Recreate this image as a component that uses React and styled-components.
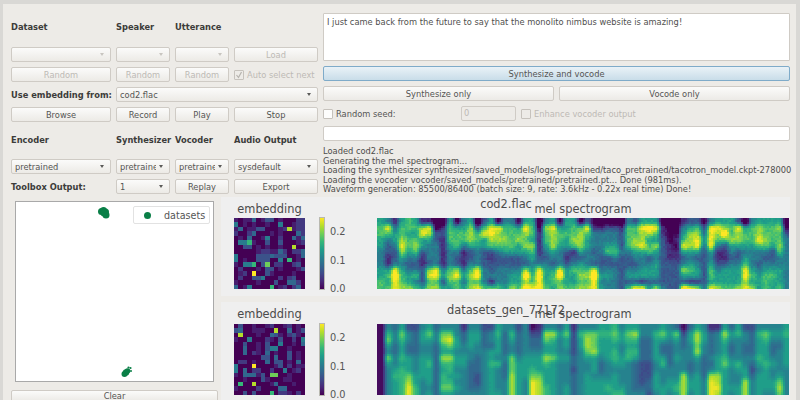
import React from 'react';
import styled, { createGlobalStyle, css } from 'styled-components';

const GlobalStyle = createGlobalStyle`
  html, body {
    margin: 0;
    padding: 0;
    background: #d9d8d5;
  }
`;

const VIRIDIS = ['#440154', '#482878', '#3e4a89', '#31688e', '#26828e', '#1f9e89', '#35b779', '#6ece58', '#b5de2b', '#fde725'];

const EMBED_COD = [
  '1011401330100022', '5010100100500122', '1401133000128122', '2002400010100042',
  '0104001500200414', '0556100300300012', '0033010100100800', '0000012211420224',
  '5000033343330014', '5010033300506010', '1055603702200230', '0200010330100013',
  '0120900310000100', '0200335000202300', '1000010003004420', '4015000060120240',
];

const EMBED_GEN = [
  '0300100120012010', '3400111008004013', '0800010043102310', '1005000210300205',
  '0030010300500104', '0040010355001000', '0040210401003010', '0000003304003010',
  '0220100403301040', '5000900001302011', '5040220020050120', '1044413077001000',
  '0010003100011000', '0600800014000100', '1000020000440000', '0030300060221020',
];

// columns of the first mel plot, low to high energy as viridis steps, top row first
const MEL_COD = [
  '566554445566', '486433225656', '245543348988', '566787545667', '665665434557', '565676434646',
  '278553223335', '287544437867', '013344448867', '023222224535', '566654446765', '156664337866',
  '456642224545', '577753346767', '036654448968', '368553334446', '588763233426', '187764334446',
  '466765334445', '466665334557', '156755334556', '587675437979', '566576545668', '012222348989',
  '476654345556', '587775435665', '156654448967', '556553235556', '566762346556', '167775356767',
  '386554446767', '124443438988', '024444334545', '034456334544', '034456434444', '023334333333',
  '466664334536', '366775434538', '587785445528', '597566345535', '586575455537', '022333333334',
  '011122233333', '011212233333', '245685347539', '357775456528', '367885345527', '134543333334',
  '488885456658', '587642234557', '579632235556', '566754345556', '387753345557', '056654568878',
  '466654445657', '577864434555', '566764345666', '566653345655', '576676445556', '013444444444',
];

const MEL_GEN = [
  '000000000000', '467547544444', '344334456555', '576556566666', '244335557899', '233334445566',
  '455445555444', '575445655545', '344333333333', '478658656675', '479758665675', '445545545454',
  '133445544444', '455544333334', '455443332234', '233344444444', '244355655555', '565554644445',
  '433334333444', '465447778888', '233334555555', '444445555444', '023345567999', '123345557888',
  '487558655566', '486557555555', '354445444444', '575545444455', '122223323333', '465544444444',
  '478875445555', '477785554555', '565554334555', '565555444565', '676566545556', '455445544456',
  '576566444444', '586565333334', '443333222234', '443333222332', '465555445554', '575335644455',
  '454333344554', '375445444565', '023344448888', '355444334554', '588785445555', '455443333444',
  '133334348999', '144445558898', '586556755555', '354334544454', '564444654455', '244334455888',
  '233334323444', '465556545555', '476555655554', '454334544554', '454344445787', '565555544444',
];

const seeded = (x, y, salt) => {
  const s = Math.sin(x * 12.9898 + y * 78.233 + salt) * 43758.5453;
  return s - Math.floor(s);
};

const clamp = (v, lo, hi) => Math.max(lo, Math.min(hi, v));

const mixViridis = (value) => {
  const i = Math.min(Math.floor(value), 8);
  const t = value - i;
  const a = VIRIDIS[i];
  const b = VIRIDIS[i + 1];
  const ch = (hex, at) => parseInt(hex.slice(at, at + 2), 16);
  const mix = (at) => Math.round(ch(a, at) * (1 - t) + ch(b, at) * t);
  return `rgb(${mix(1)},${mix(3)},${mix(5)})`;
};

// upsample of the column table, with a bit of grain for the raw recording
const melPaths = (columns, width, height, { grain, bias, contrast }) => {
  const rows = columns[0].length;
  const buckets = {};
  for (let x = 0; x < width; x += 2) {
    for (let y = 0; y < height; y += 2) {
      const u = clamp((x / width) * columns.length - 0.5, 0, columns.length - 1);
      const v = clamp((y / height) * rows - 0.5, 0, rows - 1);
      const c0 = Math.floor(u);
      const c1 = Math.min(c0 + 1, columns.length - 1);
      const r0 = Math.floor(v);
      const r1 = Math.min(r0 + 1, rows - 1);
      const raw = u - c0;
      const fu = raw * raw * (3 - 2 * raw);
      const fv = v - r0;
      const top = +columns[c0][r0] * (1 - fu) + +columns[c1][r0] * fu;
      const bottom = +columns[c0][r1] * (1 - fu) + +columns[c1][r1] * fu;
      const base = top * (1 - fv) + bottom * fv;
      const noise = (seeded(x, y, columns.length) - 0.5) * grain;
      const value = clamp(4.5 + (base - 4.5) * contrast + noise + bias, 0, 9);
      const key = Math.round(value * 4) / 4;
      buckets[key] = (buckets[key] || '') + `M${x} ${y}h2v2h-2z`;
    }
  }
  return Object.entries(buckets).map(([key, d]) => ({ fill: mixViridis(+key), d }));
};

const Page = styled.div`
  width: 800px;
  height: 400px;
  overflow: hidden;
  box-sizing: border-box;
  padding: 4px 4px 0 3px;
  background: #d9d8d5;
  font-family: "DejaVu Sans", sans-serif;
  font-size: 8.3px;
  color: #4a4a48;
`;

const Panel = styled.div`
  height: 396px;
  box-sizing: border-box;
  padding: 9px 6px 0 8px;
  background: #edebe7;
  display: flex;
  flex-direction: column;
`;

const TopRow = styled.div`
  display: flex;
  gap: 5px;
  height: 184px;
`;

const Controls = styled.div`
  width: 307px;
  display: grid;
  grid-template-columns: 100px 54px 54px 84px;
  grid-template-rows: 29px 15px 15px 15px 15px 27px 15px 15px;
  gap: 5px;
  align-items: center;
`;

const Heading = styled.div`
  font-weight: bold;
  color: #3c3c3a;
  white-space: nowrap;
`;

const SectionHeading = styled(Heading)`
  padding-bottom: 2px;
`;

const controlLook = css`
  box-sizing: border-box;
  height: 15px;
  border: 1px solid #cfcbc5;
  border-radius: 2px;
  background: linear-gradient(#fbfbfa, #eceae6);
  font-family: inherit;
  font-size: inherit;
  color: ${(p) => (p.disabled ? '#bdbab5' : '#555553')};
`;

const Button = styled.button`
  ${controlLook}
  padding: 0;
  width: 100%;
  ${(p) => p.$primary && css`
    background: linear-gradient(#e9f2f7, #c9dde9);
    border-color: #7fabc9;
  `}
`;

const ComboBox = styled.div`
  ${controlLook}
  display: flex;
  align-items: center;
  padding: 0 6px 0 3px;
  grid-column: ${(p) => p.$span || 'auto'};
`;

const ComboText = styled.span`
  flex: 1;
  overflow: hidden;
  white-space: nowrap;
`;

const Caret = styled.span`
  flex: none;
  margin-left: 3px;
  border-left: 2.5px solid transparent;
  border-right: 2.5px solid transparent;
  border-top: 3px solid ${(p) => (p.$off ? '#c8c5c0' : '#5a5a58')};
`;

const Combo = ({ children, disabled, span }) => (
  <ComboBox disabled={disabled} $span={span}>
    <ComboText>{children}</ComboText>
    <Caret $off={disabled} />
  </ComboBox>
);

const CheckLabel = styled.label`
  display: flex;
  align-items: center;
  gap: 3px;
  white-space: nowrap;
  color: ${(p) => (p.$off ? '#bdbab5' : '#555553')};
`;

const CheckBox = styled.span`
  box-sizing: border-box;
  flex: none;
  width: 10px;
  height: 10px;
  border: 1px solid #c6c2bc;
  border-radius: 1px;
  background: ${(p) => (p.$off ? '#edebe7' : '#fdfdfc')};
  display: flex;
  svg { display: block; }
`;

const Side = styled.div`
  width: 467px;
  display: flex;
  flex-direction: column;
  gap: 5px;
`;

const TextArea = styled.div`
  box-sizing: border-box;
  height: 48px;
  padding: 3px 3px;
  background: #fff;
  border: 1px solid #cfcbc5;
  border-radius: 1px;
  color: #50504e;
`;

const Pair = styled.div`
  display: grid;
  grid-template-columns: 1fr 1fr;
  gap: 5px;
`;

const SeedRow = styled.div`
  display: grid;
  grid-template-columns: 133px 55px 1fr;
  gap: 5px;
  height: 15px;
  align-items: center;
`;

const SpinBox = styled.div`
  ${controlLook}
  background: #edebe7;
  padding: 0 2px;
  line-height: 13px;
`;

const LineEdit = styled.div`
  box-sizing: border-box;
  height: 15px;
  background: #fff;
  border: 1px solid #cfcbc5;
  border-radius: 2px;
`;

const Log = styled.div`
  margin-top: 1px;
  line-height: 9.6px;
  white-space: nowrap;
  color: #4d4d4b;
`;

const BottomRow = styled.div`
  display: flex;
  gap: 3px;
  min-height: 0;
  flex: 1;
`;

const Projections = styled.div`
  width: 207px;
  flex: none;
  display: flex;
  flex-direction: column;
  gap: 8px;
  padding-top: 4px;
`;

const ScatterBox = styled.div`
  position: relative;
  box-sizing: border-box;
  width: 199px;
  height: 181px;
  margin-left: 4px;
  background: #fff;
  border: 1px solid #a9a9a9;
  svg { display: block; }
`;

const Legend = styled.div`
  position: absolute;
  top: 4px;
  right: 3px;
  box-sizing: border-box;
  width: 77px;
  height: 18px;
  display: flex;
  align-items: center;
  gap: 13px;
  padding-left: 10px;
  background: #fff;
  border: 1px solid #e2e2e2;
  border-radius: 2px;
  font-size: 9.6px;
  color: #555;
`;

const LegendDot = styled.span`
  width: 7px;
  height: 7px;
  border-radius: 50%;
  background: #0a7f47;
`;

const Figures = styled.div`
  flex: 1;
  display: flex;
  flex-direction: column;
  gap: 6px;
`;

const Figure = styled.div`
  position: relative;
  flex: none;
  height: ${(p) => p.$height}px;
  box-sizing: border-box;
  padding: 4px 0 0 13px;
  background: #efefef;
  display: grid;
  grid-template-columns: 71px 72px 412px;
  grid-template-rows: ${(p) => p.$head}px 71px;
  color: #4b4b4b;
  font-size: 11.4px;
`;

const AxisTitle = styled.div`
  text-align: center;
  white-space: nowrap;
  line-height: 16px;
  grid-column: ${(p) => p.$col};
`;

const SuperTitle = styled.div`
  position: absolute;
  top: ${(p) => p.$top}px;
  left: 285px;
  width: 0;
  display: flex;
  justify-content: center;
  white-space: nowrap;
  line-height: 14px;
`;

const PlotSvg = styled.svg`
  display: block;
  shape-rendering: crispEdges;
  filter: blur(${(p) => p.$blur}px);
`;

const ColorBarCell = styled.div`
  position: relative;
`;

const ColorBar = styled.div`
  position: absolute;
  left: 15px;
  top: 0;
  width: 4px;
  height: 71px;
  background: linear-gradient(to top, ${VIRIDIS.join(', ')});
  outline: 1px solid #b9b9b0;
`;

const Tick = styled.div`
  position: absolute;
  left: 25px;
  top: ${(p) => p.$top}px;
  font-size: 9.8px;
  line-height: 12px;
  color: #555;
`;

const EmbedMap = ({ cells }) => (
  <PlotSvg width="71" height="71" viewBox="0 0 16 16" $blur={0.3}>
    {cells.flatMap((row, y) =>
      row.split('').map((v, x) => (
        <rect key={`${x}-${y}`} x={x} y={y} width="1.02" height="1.02" fill={mixViridis(+v < 6 ? +v * 0.75 : +v)} />
      )),
    )}
  </PlotSvg>
);

const MelMap = ({ columns, look }) => (
  <PlotSvg width="412" height="71" viewBox="0 0 412 71" $blur={0.5}>
    {melPaths(columns, 412, 72, look).map((p) => (
      <path key={p.fill} d={p.d} fill={p.fill} />
    ))}
  </PlotSvg>
);

const PlotFigure = ({ name, nameTop, height, head, embed, mel, look }) => (
  <Figure $height={height} $head={head}>
    <AxisTitle $col="1">embedding</AxisTitle>
    <AxisTitle $col="3">mel spectrogram</AxisTitle>
    <SuperTitle $top={nameTop}><span>{name}</span></SuperTitle>
    <EmbedMap cells={embed} />
    <ColorBarCell>
      <ColorBar />
      <Tick $top={8}>0.2</Tick>
      <Tick $top={36.7}>0.1</Tick>
      <Tick $top={65.3}>0.0</Tick>
    </ColorBarCell>
    <MelMap columns={mel} look={look} />
  </Figure>
);

const Scatter = () => (
  <svg width="197" height="179" viewBox="16 202 197 179">
    <g fill="#0a7f47">
      <circle cx="101.5" cy="211.5" r="3.5" />
      <circle cx="103.5" cy="210.5" r="3.5" />
      <circle cx="105.5" cy="212" r="3.5" />
      <circle cx="106" cy="215" r="3.5" />
      <circle cx="104" cy="213" r="3.5" />
      <circle cx="124.5" cy="374" r="3" />
      <circle cx="126" cy="372.5" r="3.2" />
      <circle cx="127.5" cy="371" r="2.8" />
      <circle cx="130.5" cy="368" r="1.1" />
      <circle cx="128.5" cy="367.5" r="1.1" />
      <circle cx="131" cy="371" r="1" />
    </g>
  </svg>
);

const Tick9 = () => (
  <svg width="8" height="8" viewBox="0 0 8 8">
    <path d="M1.5 4l2 2.5L6.5 1" fill="none" stroke="#b5b2ad" strokeWidth="1.2" />
  </svg>
);

export default function App() {
  return (
    <>
      <GlobalStyle />
      <Page>
        <Panel>
          <TopRow>
            <Controls>
              <SectionHeading>Dataset</SectionHeading>
              <SectionHeading>Speaker</SectionHeading>
              <SectionHeading>Utterance</SectionHeading>
              <span />

              <Combo disabled />
              <Combo disabled />
              <Combo disabled />
              <Button disabled>Load</Button>

              <Button disabled>Random</Button>
              <Button disabled>Random</Button>
              <Button disabled>Random</Button>
              <CheckLabel $off>
                <CheckBox $off><Tick9 /></CheckBox>
                Auto select next
              </CheckLabel>

              <Heading>Use embedding from:</Heading>
              <Combo span="2 / 5">cod2.flac</Combo>

              <Button>Browse</Button>
              <Button>Record</Button>
              <Button>Play</Button>
              <Button>Stop</Button>

              <SectionHeading>Encoder</SectionHeading>
              <SectionHeading>Synthesizer</SectionHeading>
              <SectionHeading>Vocoder</SectionHeading>
              <SectionHeading>Audio Output</SectionHeading>

              <Combo>pretrained</Combo>
              <Combo>pretrained</Combo>
              <Combo>pretrained</Combo>
              <Combo>sysdefault</Combo>

              <Heading>Toolbox Output:</Heading>
              <Combo>1</Combo>
              <Button>Replay</Button>
              <Button>Export</Button>
            </Controls>
            <Side>
              <TextArea>I just came back from the future to say that the monolito nimbus website is amazing!</TextArea>
              <Button $primary>Synthesize and vocode</Button>
              <Pair>
                <Button>Synthesize only</Button>
                <Button>Vocode only</Button>
              </Pair>
              <SeedRow>
                <CheckLabel>
                  <CheckBox />
                  Random seed:
                </CheckLabel>
                <SpinBox disabled>0</SpinBox>
                <CheckLabel $off>
                  <CheckBox $off />
                  Enhance vocoder output
                </CheckLabel>
              </SeedRow>
              <LineEdit />
              <Log>
                Loaded cod2.flac<br />
                Generating the mel spectrogram...<br />
                Loading the synthesizer synthesizer/saved_models/logs-pretrained/taco_pretrained/tacotron_model.ckpt-278000<br />
                Loading the vocoder vocoder/saved_models/pretrained/pretrained.pt... Done (981ms).<br />
                Waveform generation: 85500/86400 (batch size: 9, rate: 3.6kHz - 0.22x real time) Done!
              </Log>
            </Side>
          </TopRow>
          <BottomRow>
            <Projections>
              <ScatterBox>
                <Scatter />
                <Legend>
                  <LegendDot />
                  datasets
                </Legend>
              </ScatterBox>
              <Button>Clear</Button>
            </Projections>
            <Figures>
              <PlotFigure name="cod2.flac" nameTop={0} height={99} head={17} embed={EMBED_COD} mel={MEL_COD} look={{ grain: 0.7, bias: -0.1, contrast: 1.3 }} />
              <PlotFigure name="datasets_gen_77172" nameTop={1} height={99} head={18} embed={EMBED_GEN} mel={MEL_GEN} look={{ grain: 0.05, bias: 0, contrast: 0.95 }} />
            </Figures>
          </BottomRow>
        </Panel>
      </Page>
    </>
  );
}
